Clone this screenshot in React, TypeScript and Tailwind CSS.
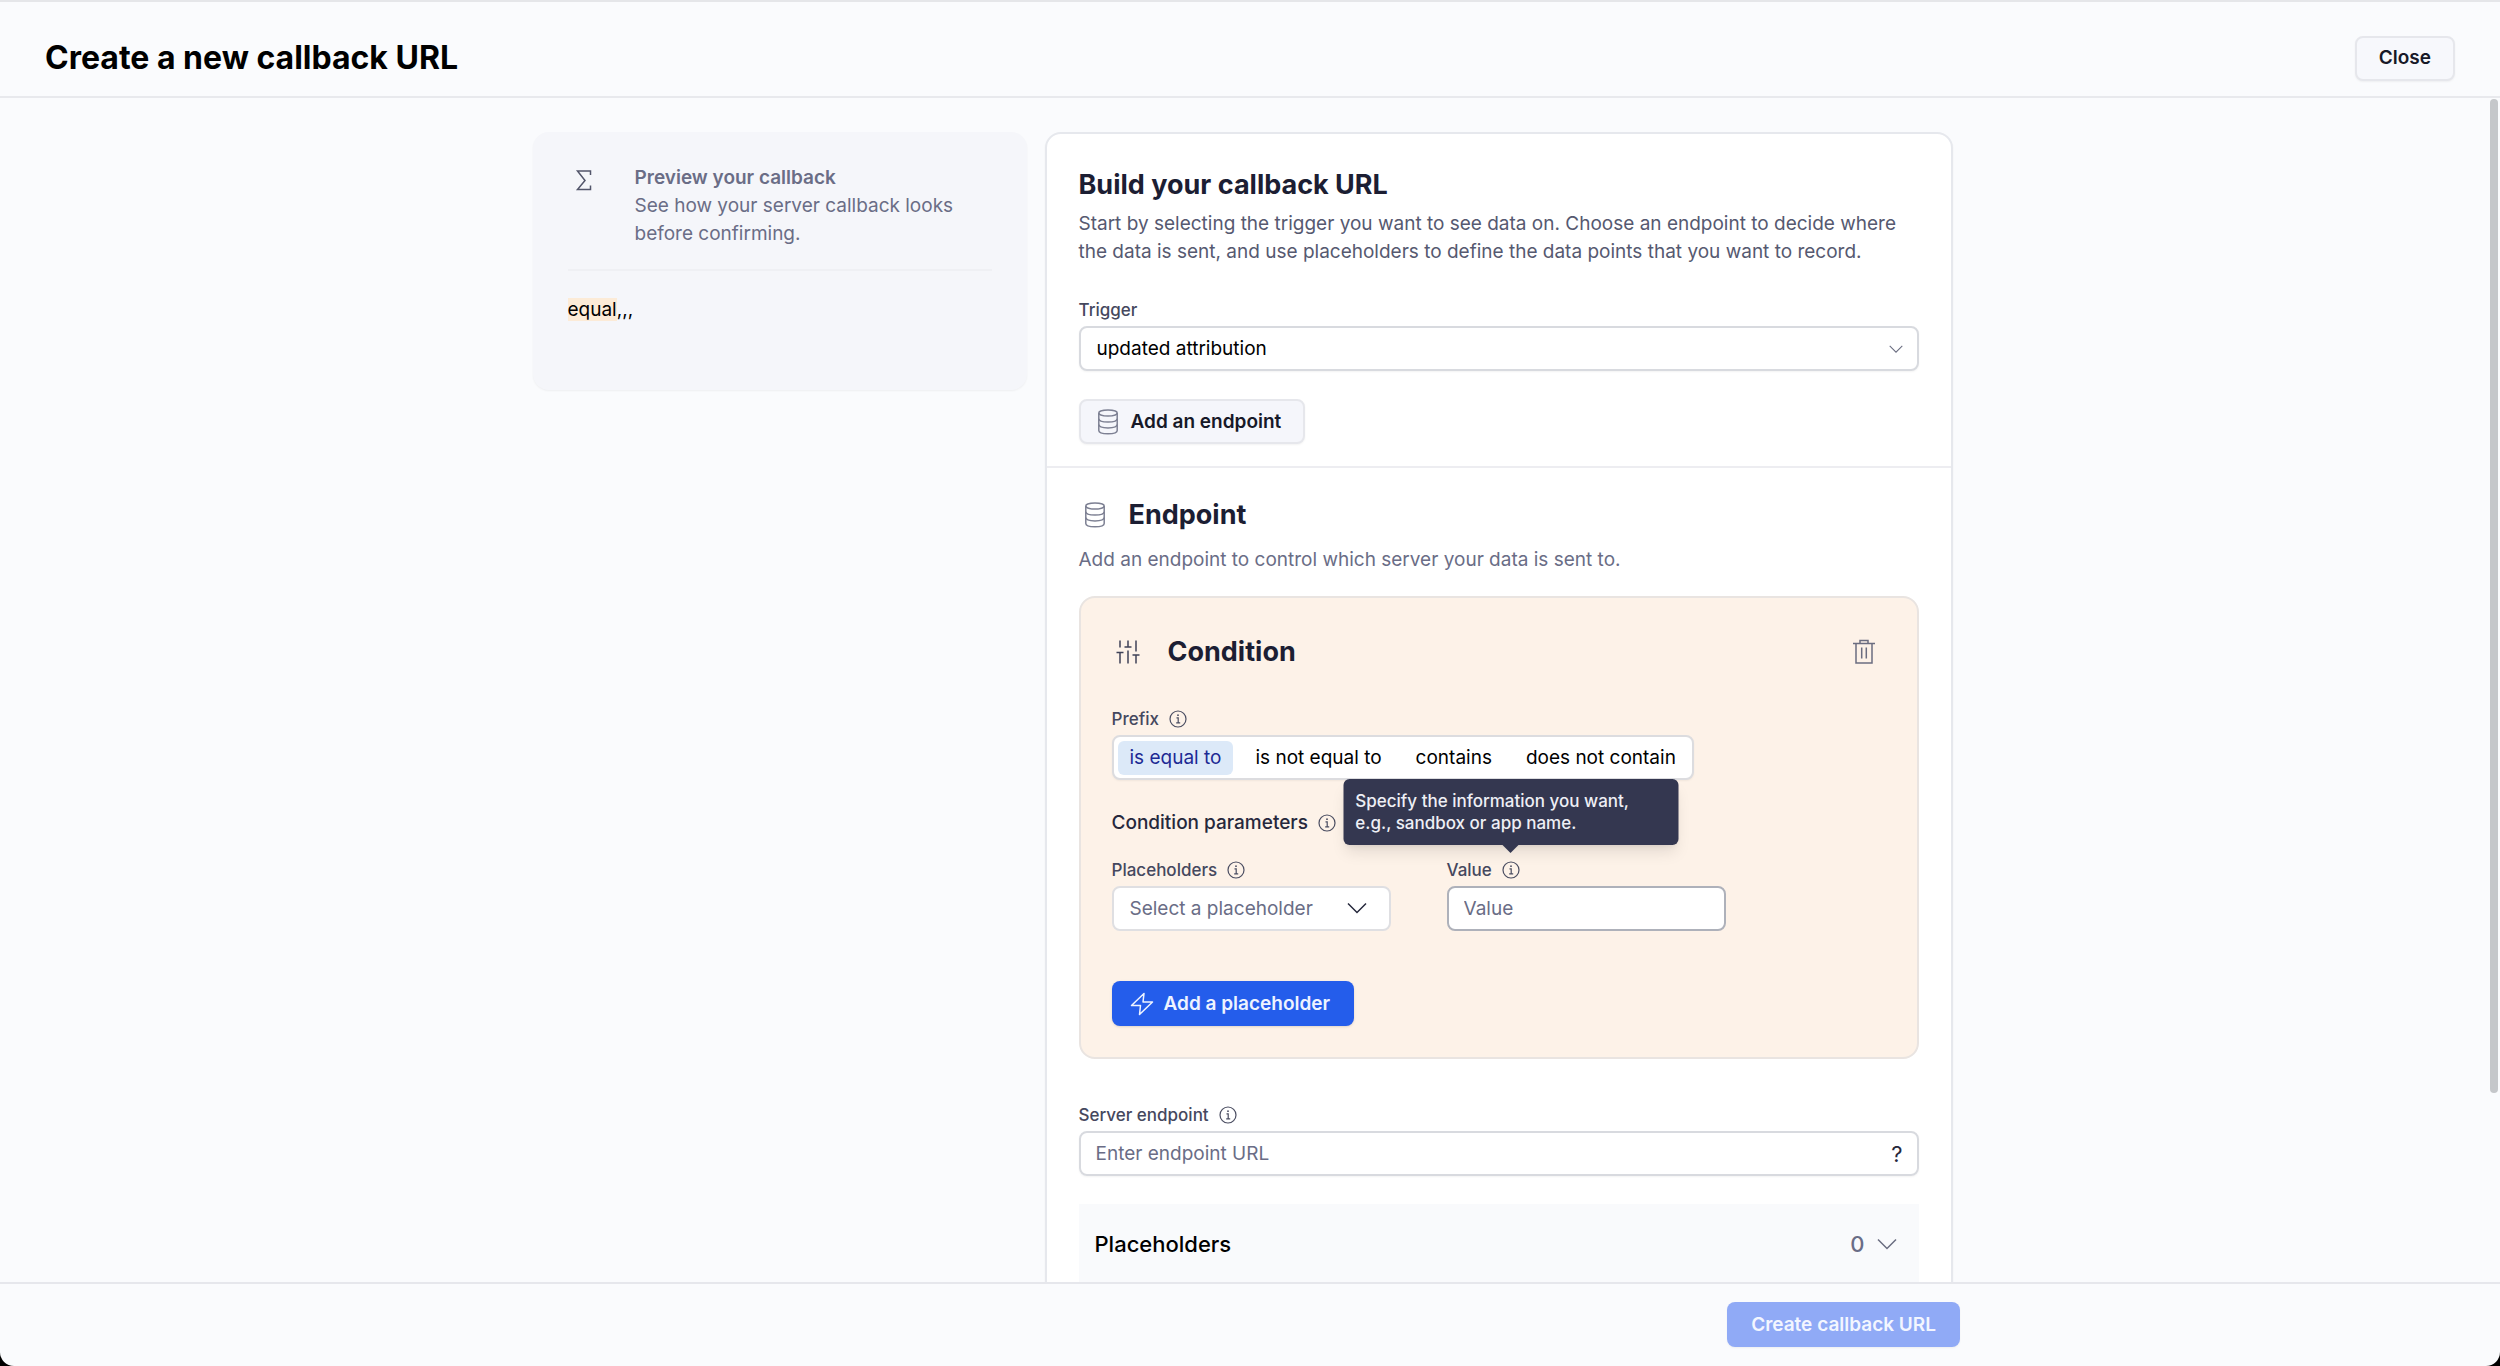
import { useState } from "react"
import type { ReactNode } from "react"
import clsx from "clsx"

const prefixes = ["is equal to", "is not equal to", "contains", "does not contain"]

function SigmaIcon() {
  return (
    <svg width="32" height="32" viewBox="0 0 32 32" fill="none" stroke="#53566b" strokeWidth="1.5">
      <path d="M22.500 11V7H9.500L17 16.500L9.500 25.500H22.500V21.500" />
    </svg>
  )
}

function DatabaseIcon({ className }: { className?: string }) {
  return (
    <svg className={className} width="32" height="32" viewBox="0 0 32 32" fill="none" stroke="currentColor" strokeWidth="1.5">
      <ellipse cx="16" cy="7" rx="9.200" ry="3" />
      <path d="M6.800 7V24.500C6.800 26.500 10.500 27.800 16 27.800S25.200 26.500 25.200 24.500V7" />
      <path d="M6.800 12.700C6.800 14.700 10.500 16 16 16S25.200 14.700 25.200 12.700" />
      <path d="M6.800 18.600C6.800 20.600 10.500 21.900 16 21.900S25.200 20.600 25.200 18.600" />
    </svg>
  )
}

function SlidersIcon() {
  return (
    <svg width="32" height="32" viewBox="0 0 32 32" fill="none" stroke="#3f4257" strokeWidth="1.5">
      <path d="M8 4.500V11.500M4.500 16.500H11.500M8 16.500V27.500" />
      <path d="M16 4.500V11M12.500 11H19.500M16 14.500V27.500" />
      <path d="M24 4.500V15.500M20.500 19H27.500M24 19V27.500" />
    </svg>
  )
}

function TrashIcon() {
  return (
    <svg width="32" height="32" viewBox="0 0 32 32" fill="none" stroke="#6b6d80" strokeWidth="1.5">
      <path d="M5 7.500H27M12 7.500V4.500H20V7.500M8 7.500V27H24V7.500" />
      <path d="M13.700 11.500V22.500M18.300 11.500V22.500" />
    </svg>
  )
}

function BoltIcon() {
  return (
    <svg width="24" height="24" viewBox="0 0 24 24" fill="none" stroke="currentColor" strokeWidth="1.5" strokeLinejoin="round">
      <path d="M14 1.500L1.500 13.500H10.500L9.500 22.500L22.500 10H13Z" />
    </svg>
  )
}

function InfoIcon() {
  return (
    <svg width="18" height="18" viewBox="0 0 18 18" fill="none" stroke="#4a4d61" strokeWidth="1.2">
      <circle cx="9" cy="9" r="8" />
      <path d="M7.500 7.800H9.200V12.700M7.200 12.900H11.200" />
      <circle cx="9" cy="5.200" r="0.900" fill="#4a4d61" stroke="none" />
    </svg>
  )
}

function Chevron({ className, size = 20 }: { className?: string; size?: number }) {
  return (
    <svg className={className} width={size} height={size} viewBox="0 0 20 20" fill="none" stroke="currentColor" strokeWidth="1.5">
      <path d="M1 5.500L10 14.500L19 5.500" />
    </svg>
  )
}

interface FieldLabelProps {
  id?: string
  htmlFor?: string
  text: string
  info?: string
  children?: ReactNode
}

function FieldLabel({ id, htmlFor, text, info, children }: FieldLabelProps) {
  return (
    <div className="mb-1 flex items-center gap-[10px] text-[17px] leading-6 font-medium text-[#45485e]">
      <label id={id} htmlFor={htmlFor}>{text}</label>
      {info && (
        <span className="relative">
          <button type="button" aria-label={info} className="block">
            <InfoIcon />
          </button>
          {children}
        </span>
      )}
    </div>
  )
}

function Tooltip({ children }: { children: ReactNode }) {
  return (
    <div
      role="tooltip"
      className="absolute bottom-full left-1/2 z-10 mb-4 w-[335px] -translate-x-1/2 rounded-md bg-[#343750] px-3 py-[11px] text-[17px] leading-[22px] font-medium text-[#eeeff5] shadow-lg"
    >
      {children}
      <span className="absolute top-full left-1/2 -translate-x-1/2 border-x-8 border-t-8 border-x-transparent border-t-[#343750]" />
    </div>
  )
}

export default function App() {
  const [prefix, setPrefix] = useState("is equal to")
  const [trigger, setTrigger] = useState("updated attribution")
  const [value, setValue] = useState("")
  const [endpoint, setEndpoint] = useState("")

  return (
    <div className="h-screen bg-black font-['Inter',sans-serif] text-[19px] leading-7 text-black">
      <div className="flex h-full flex-col overflow-hidden rounded-b-[14px] border-t-2 border-[#e5e6e9] bg-[#fafbfd]">
        <header className="flex h-24 shrink-0 items-center justify-between border-b-2 border-[#e8e9ed] px-[45px] pt-[18px]">
          <h1 className="text-[32px] leading-10 font-bold">Create a new callback URL</h1>
          <button type="button" className="h-[45px] rounded-lg border-2 border-[#e6e7ec] bg-[#f7f8fc] px-[22px] font-semibold text-[#171928] shadow-xs">
            Close
          </button>
        </header>

        <div className="flex min-h-0 flex-1">
          <main className="min-w-0 flex-1 overflow-hidden px-4 pt-[34px]">
            <div className="mx-auto grid max-w-[1420px] grid-cols-[494fr_908fr] items-start gap-[18px]">
              <aside className="rounded-2xl bg-[#f5f6fa] px-[35px] pt-8 pb-[66px] shadow-xs">
                <div className="flex gap-[35px] border-b-2 border-[#eff0f4] pb-[21px]">
                  <SigmaIcon />
                  <div className="flex-1 text-[#6a6d86]">
                    <h2 className="text-[19px] leading-7 font-semibold">Preview your callback</h2>
                    <p>See how your server callback looks before confirming.</p>
                  </div>
                </div>
                <p className="mt-[25px]">
                  <mark className="bg-[#fcebd7] text-black">equal</mark>,,,
                </p>
              </aside>

              <form className="rounded-2xl border-2 border-[#e6e8ed] bg-white shadow-xs">
                <section className="border-b-2 border-[#ededf1] px-8 pt-[33px] pb-[22px]">
                  <h2 className="text-[27px] leading-9 font-bold text-[#1c1e33]">Build your callback URL</h2>
                  <p className="mt-[7px] mb-8 text-[#565970]">
                    Start by selecting the trigger you want to see data on. Choose an endpoint to decide where the data
                    is sent, and use placeholders to define the data points that you want to record.
                  </p>
                  <FieldLabel htmlFor="trigger" text="Trigger" />
                  <div className="relative">
                    <select
                      id="trigger"
                      value={trigger}
                      onChange={(e) => setTrigger(e.target.value)}
                      className="h-[45px] w-full appearance-none rounded-lg border-2 border-[#d8dadf] bg-white px-4 shadow-xs"
                    >
                      <option>updated attribution</option>
                    </select>
                    <Chevron size={14} className="pointer-events-none absolute top-4 right-4 text-[#6a6d80]" />
                  </div>
                  <button
                    type="button"
                    className="mt-7 flex h-[45px] items-center gap-[7px] rounded-lg border-2 border-[#e6e7ec] bg-[#f5f6fb] pr-[22px] pl-[11px] font-semibold text-[#171928] shadow-xs"
                  >
                    <DatabaseIcon className="text-[#7d8093]" />
                    Add an endpoint
                  </button>
                </section>

                <section className="px-8 pt-[29px]">
                  <h2 className="flex items-center gap-[18px] text-[27px] leading-9 font-bold text-[#1c1e33]">
                    <DatabaseIcon className="text-[#7d8093]" />
                    Endpoint
                  </h2>
                  <p className="mt-[13px] text-[#6a6d86]">
                    Add an endpoint to control which server your data is sent to.
                  </p>

                  <div className="mt-[22px] rounded-2xl border-2 border-[#e9e4e1] bg-[#fdf2e8] px-[31px] pt-9 pb-[31px]">
                    <div className="flex h-9 items-center gap-6">
                      <SlidersIcon />
                      <h3 className="text-[27px] leading-9 font-bold text-[#1c1e33]">Condition</h3>
                      <button type="button" aria-label="Delete condition" className="mr-[6px] ml-auto">
                        <TrashIcon />
                      </button>
                    </div>

                    <div className="mt-[37px]">
                      <FieldLabel id="prefix-label" text="Prefix" info="About prefix" />
                      <div
                        role="radiogroup"
                        aria-labelledby="prefix-label"
                        className="inline-flex h-[45px] items-center gap-[10px] rounded-lg border-2 border-[#dcdcdf] bg-white px-1 shadow-xs"
                      >
                        {prefixes.map((name) => (
                          <label
                            key={name}
                            className={clsx(
                              "relative rounded-md px-3 py-[3px]",
                              prefix === name && "bg-[#dce9f8] text-[#1c2a94]",
                            )}
                          >
                            <input
                              type="radio"
                              name="prefix"
                              className="sr-only"
                              checked={prefix === name}
                              onChange={() => setPrefix(name)}
                            />
                            {name}
                          </label>
                        ))}
                      </div>
                    </div>

                    <div className="mt-[29px] flex items-center gap-[10px]">
                      <h4 className="font-medium text-[#26283c]">Condition parameters</h4>
                      <button type="button" aria-label="About condition parameters">
                        <InfoIcon />
                      </button>
                    </div>

                    <div className="mt-[21px] flex gap-14">
                      <div className="w-[279px]">
                        <FieldLabel htmlFor="placeholder" text="Placeholders" info="About placeholders" />
                        <div className="relative">
                          <select
                            id="placeholder"
                            className="h-[45px] w-full appearance-none rounded-lg border-2 border-[#dfdfe2] bg-white px-4 text-[#6a6d86]"
                          >
                            <option>Select a placeholder</option>
                          </select>
                          <Chevron className="pointer-events-none absolute top-3 right-6 text-[#26283c]" />
                        </div>
                      </div>
                      <div className="w-[279px]">
                        <FieldLabel htmlFor="value" text="Value" info="About value">
                          <Tooltip>Specify the information you want, e.g., sandbox or app name.</Tooltip>
                        </FieldLabel>
                        <input
                          id="value"
                          value={value}
                          onChange={(e) => setValue(e.target.value)}
                          placeholder="Value"
                          className="h-[45px] w-full rounded-lg border-2 border-[#aeb1ba] bg-white px-[15px] placeholder:text-[#6a6d86]"
                        />
                      </div>
                    </div>

                    <button
                      type="button"
                      className="mt-[50px] flex h-[45px] items-center gap-[10px] rounded-lg bg-[#245deb] pr-6 pl-[18px] font-semibold text-[#eef3ff] shadow-sm"
                    >
                      <BoltIcon />
                      Add a placeholder
                    </button>
                  </div>

                  <div className="mt-11">
                    <FieldLabel htmlFor="endpoint" text="Server endpoint" info="About server endpoint" />
                    <div className="flex h-[45px] items-center rounded-lg border-2 border-[#d8dadf] pr-[14px] pl-[15px] shadow-xs">
                      <input
                        id="endpoint"
                        value={endpoint}
                        onChange={(e) => setEndpoint(e.target.value)}
                        placeholder="Enter endpoint URL"
                        className="min-w-0 flex-1 outline-none placeholder:text-[#6a6d86]"
                      />
                      <button type="button" aria-label="Endpoint help" className="text-[22px] leading-7 text-[#26283c]">?</button>
                    </div>
                  </div>

                  <button
                    type="button"
                    className="mt-7 mb-8 flex h-20 w-full items-center bg-[#f9fafc] px-4 text-[22px] font-medium"
                  >
                    Placeholders
                    <span className="ml-auto text-[#6a6d86]">0</span>
                    <Chevron className="mr-[6px] ml-3 text-[#6a6d80]" />
                  </button>
                </section>
              </form>
            </div>
          </main>
          <div className="w-[15px] shrink-0 pt-px pl-[5px]">
            <div className="h-[84%] w-2 rounded-full bg-[#c5c7ca]" />
          </div>
        </div>

        <footer className="h-[84px] shrink-0 border-t-2 border-[#e6e7ec] px-4 pt-[18px]">
          <div className="mx-auto flex max-w-[1420px] justify-end">
            <button type="submit" disabled className="h-[45px] rounded-lg bg-[#90aaf6] px-6 font-semibold text-[#f3f6ff] shadow-xs">
              Create callback URL
            </button>
          </div>
        </footer>
      </div>
    </div>
  )
}
